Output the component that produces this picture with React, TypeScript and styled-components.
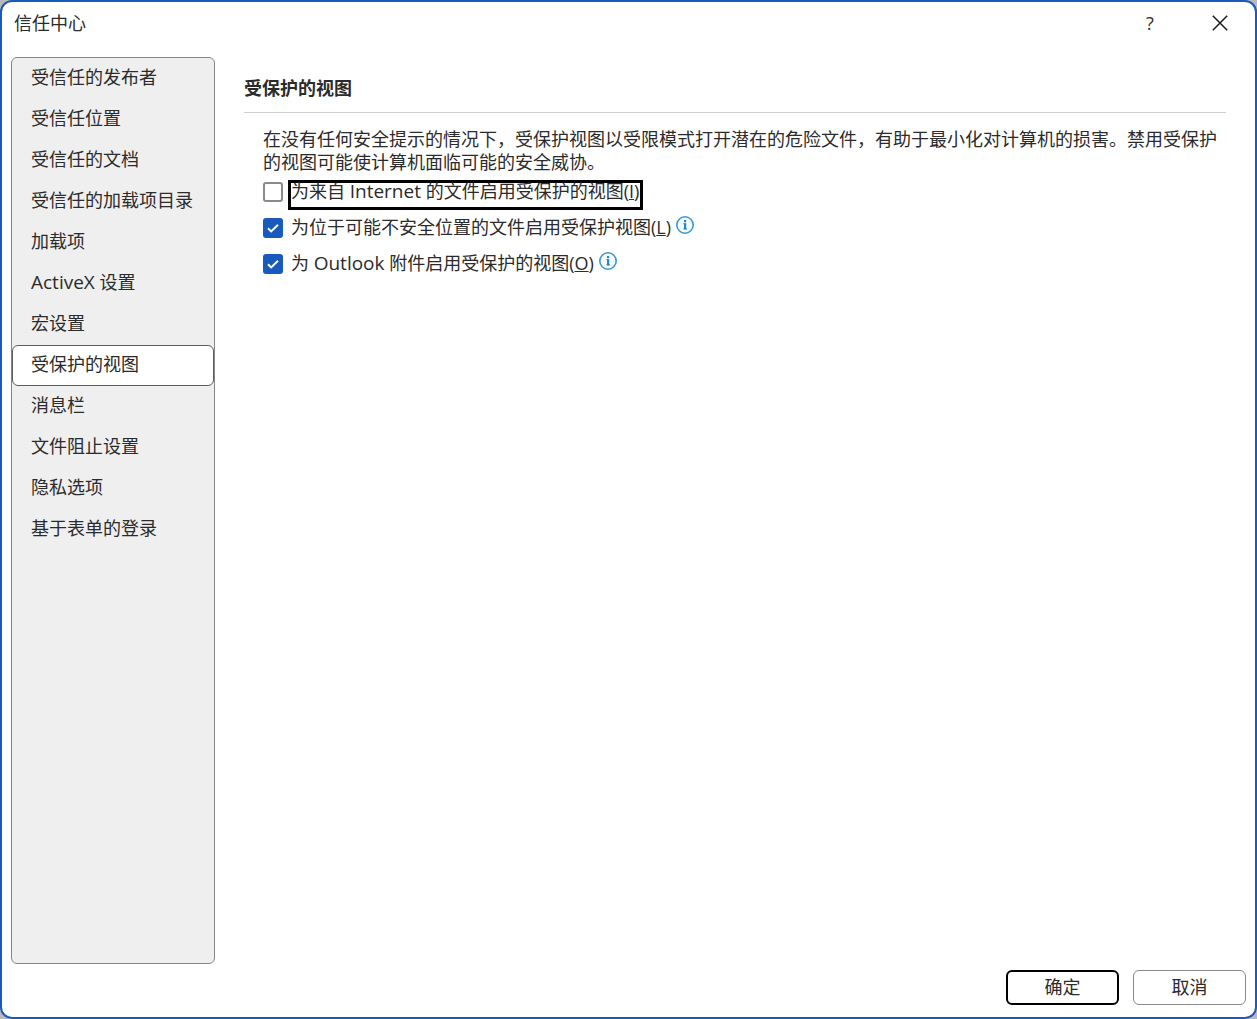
import React, { useState } from "react";
import styled, { createGlobalStyle } from "styled-components";

const GlobalStyle = createGlobalStyle`
  *, *::before, *::after { box-sizing: border-box; }
  body {
    margin: 0;
    background: #b9b9bd;
    color: #2b2b2b;
    font: 18px/24px "Open Sans", "Noto Sans CJK SC", sans-serif;
  }
  button, input { font: inherit; color: inherit; margin: 0; }
`;

const Dialog = styled.div`
  display: flex;
  flex-direction: column;
  min-height: 100vh;
  border: 2px solid #185abd;
  border-radius: 12px;
  background: #fff;
`;

const TitleBar = styled.header`
  display: flex;
  align-items: center;
  justify-content: space-between;
  height: 41px;
  padding: 0 11px 0 12px;
`;

const Title = styled.h1`
  margin: 0;
  font-size: 18px;
  font-weight: 400;
`;

const WindowButtons = styled.div`
  display: flex;
  gap: 22px;
`;

const WindowButton = styled.button`
  display: flex;
  align-items: center;
  justify-content: center;
  width: 48px;
  height: 36px;
  padding: 0;
  border: 0;
  background: transparent;
`;

const Body = styled.div`
  display: flex;
  flex: 1;
  padding: 14px 29px 6px 9px;
  gap: 29px;
`;

const Sidebar = styled.nav`
  display: flex;
  flex-direction: column;
  flex: none;
  width: 204px;
  border: 1px solid #868686;
  border-radius: 6px;
  background: #efefef;
`;

const NavItem = styled.button<{ $active: boolean }>`
  height: 41px;
  padding: 0 18px 3px;
  border: 1px solid ${(p) => (p.$active ? "#5c5c5c" : "transparent")};
  border-radius: 6px;
  background: ${(p) => (p.$active ? "#fff" : "transparent")};
  text-align: left;
  white-space: nowrap;
`;

const Latin = styled.span`
  font-size: 19px;
  line-height: 0;
`;

const Main = styled.main`
  flex: 1;
  min-width: 0;
`;

const Heading = styled.h2`
  margin: 0;
  padding: 19px 0 12px;
  border-bottom: 1px solid #d0d0d0;
  font-size: 18px;
  line-height: 24px;
  font-weight: 700;
`;

const Section = styled.section`
  padding: 15px 0 0 19px;
`;

const Description = styled.p`
  margin: 0;
  line-height: 23px;
`;

const OptionList = styled.div`
  display: flex;
  flex-direction: column;
  gap: 6px;
  padding-top: 6px;
`;

const OptionRow = styled.div`
  display: flex;
  align-items: flex-start;
`;

const CheckBox = styled.input`
  appearance: none;
  flex: none;
  width: 20px;
  height: 20px;
  margin: 2px 5px 0 0;
  border: 2px solid #8a8a8a;
  border-radius: 3px;
  background: #fff;

  &:checked {
    border-color: #185abd;
    background: #185abd
      url("data:image/svg+xml,%3Csvg xmlns='http://www.w3.org/2000/svg' viewBox='0 0 16 16' fill='none' stroke='white' stroke-width='2'%3E%3Cpath d='M3 8.2l3.2 3.2L13 4.8'/%3E%3C/svg%3E")
      center / 16px 16px no-repeat;
  }
`;

const OptionLabel = styled.label<{ $framed: boolean }>`
  height: 30px;
  border: 3px solid ${(p) => (p.$framed ? "#000" : "transparent")};
  padding-right: 1px;
  line-height: 16px;
`;

const InfoButton = styled.button`
  display: flex;
  padding: 0;
  border: 0;
  background: transparent;
`;

const Footer = styled.footer`
  display: flex;
  justify-content: flex-end;
  gap: 14px;
  padding: 0 9px 12px;
`;

const ActionButton = styled.button<{ $primary?: boolean }>`
  width: 113px;
  height: 35px;
  padding: 0 0 2px;
  border: ${(p) => (p.$primary ? "2px solid #000" : "1px solid #8a8a8a")};
  border-radius: 6px;
  background: #fff;
`;

const InfoIcon = () => (
  <svg width="20" height="20" viewBox="0 0 20 20" fill="none" aria-hidden="true">
    <circle cx="10" cy="9" r="8.2" fill="#f5fafd" stroke="#3a97d3" strokeWidth="1.6" />
    <path d="M8.4 7.7h2M8.4 12.9h3.6" stroke="#1e88c8" strokeWidth="1" />
    <path d="M10.1 7.2v6.2" stroke="#1e88c8" strokeWidth="2.2" />
    <rect x="9" y="4" width="2.2" height="2.2" fill="#1e88c8" />
  </svg>
);

const sections = [
  "受信任的发布者",
  "受信任位置",
  "受信任的文档",
  "受信任的加载项目录",
  "加载项",
  "ActiveX 设置",
  "宏设置",
  "受保护的视图",
  "消息栏",
  "文件阻止设置",
  "隐私选项",
  "基于表单的登录",
];

const options = [
  { id: "internet", text: "为来自 Internet 的文件启用受保护的视图", accessKey: "I", checked: false, info: false },
  { id: "unsafe", text: "为位于可能不安全位置的文件启用受保护视图", accessKey: "L", checked: true, info: true },
  { id: "outlook", text: "为 Outlook 附件启用受保护的视图", accessKey: "O", checked: true, info: true },
];

// Sets Latin words slightly larger than the Chinese text around them.
const MixedText = ({ text }: { text: string }) => (
  <>
    {text.split(/([A-Za-z]+)/).map((part, i) => (i % 2 ? <Latin key={i}>{part}</Latin> : part))}
  </>
);

export default function App() {
  const [active, setActive] = useState("受保护的视图");
  const [focused, setFocused] = useState("internet");

  return (
    <>
      <GlobalStyle />
      <Dialog role="dialog" aria-labelledby="dialog-title">
        <TitleBar>
          <Title id="dialog-title">信任中心</Title>
          <WindowButtons>
            <WindowButton type="button" aria-label="帮助">?</WindowButton>
            <WindowButton type="button" aria-label="关闭">
              <svg width="16" height="16" viewBox="0 0 16 16" stroke="#1a1a1a" strokeWidth="1.5" aria-hidden="true">
                <path d="M0.8 0.8l14.4 14.4M15.2 0.8L0.8 15.2" />
              </svg>
            </WindowButton>
          </WindowButtons>
        </TitleBar>
        <Body>
          <Sidebar>
            {sections.map((name) => (
              <NavItem key={name} type="button" $active={name === active} onClick={() => setActive(name)}>
                <MixedText text={name} />
              </NavItem>
            ))}
          </Sidebar>
          <Main>
            <Heading>受保护的视图</Heading>
            <Section>
              <Description>
                在没有任何安全提示的情况下，受保护视图以受限模式打开潜在的危险文件，有助于最小化对计算机的损害。禁用受保护的视图可能使计算机面临可能的安全威协。
              </Description>
              <OptionList>
                {options.map((o) => (
                  <OptionRow key={o.id}>
                    <CheckBox
                      id={o.id}
                      type="checkbox"
                      defaultChecked={o.checked}
                      onFocus={() => setFocused(o.id)}
                    />
                    <OptionLabel htmlFor={o.id} $framed={o.id === focused}>
                      <MixedText text={o.text} />(<u>{o.accessKey}</u>)
                    </OptionLabel>
                    {o.info && (
                      <InfoButton type="button" aria-label="信息">
                        <InfoIcon />
                      </InfoButton>
                    )}
                  </OptionRow>
                ))}
              </OptionList>
            </Section>
          </Main>
        </Body>
        <Footer>
          <ActionButton type="button" $primary>确定</ActionButton>
          <ActionButton type="button">取消</ActionButton>
        </Footer>
      </Dialog>
    </>
  );
}
